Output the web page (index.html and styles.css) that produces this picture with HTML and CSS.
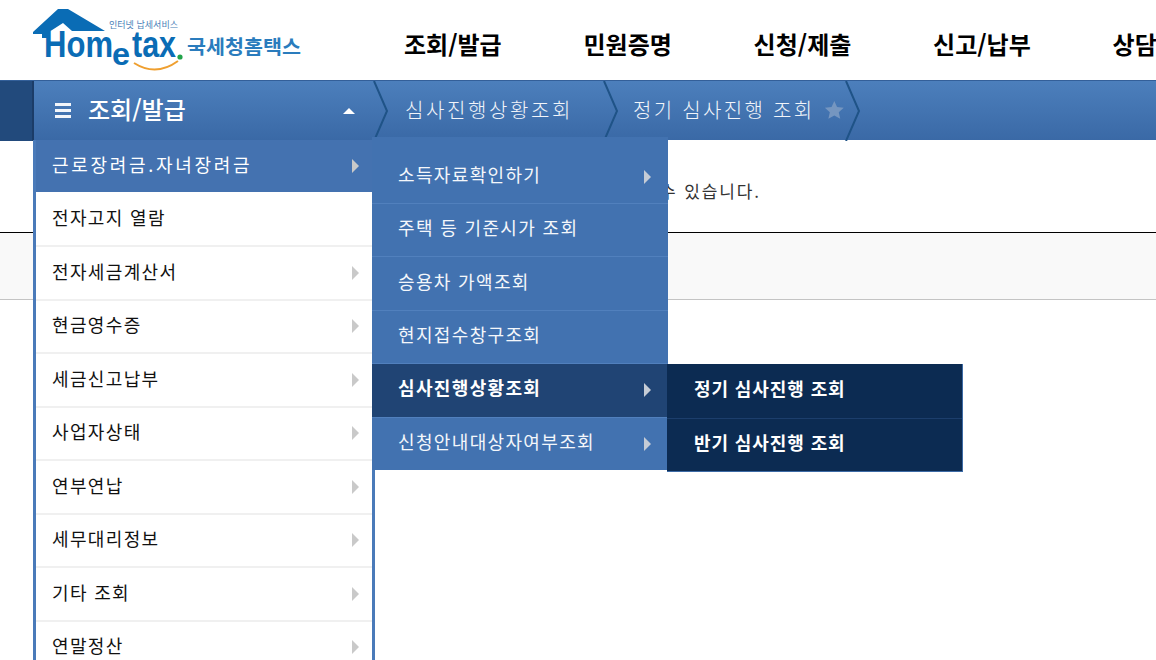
FILE: index.html
```html
<!DOCTYPE html>
<html lang="ko">
<head>
<meta charset="utf-8">
<title>Hometax</title>
<link rel="stylesheet" href="styles.css">
</head>
<body>
<header class="top">
  <a class="logo" href="#" aria-label="Hometax">
    <svg width="275" height="72" viewBox="0 0 275 72">
      <path class="roof" d="M1 26 L26 3 H36 L73 25 H40 L31 17 L17 26 H17 V32 H10 V28 H1 Z"/>
      <text class="lg-small" x="77" y="22" textLength="69" lengthAdjust="spacingAndGlyphs">인터넷 납세서비스</text>
      <text class="lg-home" x="12" y="51" textLength="69" lengthAdjust="spacingAndGlyphs">Hom</text>
      <text class="lg-e" x="80" y="59" textLength="18" lengthAdjust="spacingAndGlyphs">e</text>
      <text class="lg-home" x="100" y="51" textLength="44" lengthAdjust="spacingAndGlyphs">tax</text>
      <circle class="lg-dot" cx="148" cy="51" r="2.6"/>
      <path class="lg-smile" d="M102 57 Q124 71 146 55"/>
      <text class="lg-kr" x="155" y="48" textLength="114" lengthAdjust="spacingAndGlyphs">국세청홈택스</text>
    </svg>
  </a>
  <nav class="gnb">
    <a href="#">조회/발급</a>
    <a href="#">민원증명</a>
    <a href="#">신청/제출</a>
    <a href="#">신고/납부</a>
    <a href="#">상담/제보</a>
  </nav>
</header>

<div class="bar">
  <div class="bar-side"></div>
  <div class="bar-title">
    <span class="burger"><i></i><i></i><i></i></span>
    <span class="title-text">조회/발급</span>
    <span class="caret"></span>
  </div>
  <div class="crumb crumb-first">
    <svg class="chev" width="16" height="60" viewBox="0 0 16 60"><path d="M1 0 L14 30 L1 60"/></svg>
    <span class="crumb-text">심사진행상황조회</span>
  </div>
  <div class="crumb crumb-second">
    <svg class="chev" width="16" height="60" viewBox="0 0 16 60"><path d="M1 0 L14 30 L1 60"/></svg>
    <span class="crumb-text">정기 심사진행 조회</span>
    <svg class="star" width="24" height="24" viewBox="0 0 24 24"><path d="M12 1.5 L15.2 8.6 L23 9.4 L17.2 14.6 L18.9 22.3 L12 18.3 L5.1 22.3 L6.8 14.6 L1 9.4 L8.8 8.6 Z"/></svg>
  </div>
  <svg class="chev" width="16" height="60" viewBox="0 0 16 60"><path d="M1 0 L14 30 L1 60"/></svg>
</div>

<main class="content">
  <p class="desc">수 있습니다.</p>
  <div class="info-box"></div>
</main>

<ul class="menu menu-1">
  <li class="on"><a href="#">근로장려금.자녀장려금</a><span class="arrow"></span></li>
  <li><a href="#">전자고지 열람</a></li>
  <li><a href="#">전자세금계산서</a><span class="arrow"></span></li>
  <li><a href="#">현금영수증</a><span class="arrow"></span></li>
  <li><a href="#">세금신고납부</a><span class="arrow"></span></li>
  <li><a href="#">사업자상태</a><span class="arrow"></span></li>
  <li><a href="#">연부연납</a><span class="arrow"></span></li>
  <li><a href="#">세무대리정보</a><span class="arrow"></span></li>
  <li><a href="#">기타 조회</a><span class="arrow"></span></li>
  <li><a href="#">연말정산</a><span class="arrow"></span></li>
</ul>

<ul class="menu menu-2">
  <li class="first"><a href="#">소득자료확인하기</a><span class="arrow"></span></li>
  <li><a href="#">주택 등 기준시가 조회</a></li>
  <li><a href="#">승용차 가액조회</a></li>
  <li><a href="#">현지접수창구조회</a></li>
  <li class="sel"><a href="#">심사진행상황조회</a><span class="arrow"></span></li>
  <li><a href="#">신청안내대상자여부조회</a><span class="arrow"></span></li>
</ul>

<ul class="menu menu-3">
  <li><a href="#">정기 심사진행 조회</a></li>
  <li><a href="#">반기 심사진행 조회</a></li>
</ul>
</body>
</html>
```
FILE: styles.css
```css
* { box-sizing: border-box; }
html, body { margin: 0; padding: 0; }
body {
  width: 1156px;
  height: 660px;
  overflow: hidden;
  position: relative;
  background: #fff;
  font-family: "Noto Sans CJK KR", "Noto Sans", sans-serif;
  color: #111;
}
a { color: inherit; text-decoration: none; }
ul { list-style: none; margin: 0; padding: 0; }

.top { height: 80px; display: flex; align-items: flex-start; }
.logo { display: block; width: 404px; height: 80px; padding: 6px 0 0 32px; flex: none; }
.logo svg { display: block; }
.roof { fill: #0a6cb5; }
.lg-small { font-size: 9px; fill: #4a7fb8; }
.lg-home { font: bold 36px "Liberation Sans", sans-serif; fill: #0a6cb5; }
.lg-e { font: bold 32px "Liberation Sans", sans-serif; fill: #0a6cb5; }
.lg-dot { fill: #22a34a; }
.lg-smile { fill: none; stroke: #ef9f2f; stroke-width: 2; }
.lg-kr { font-size: 19px; font-weight: 700; fill: #2a7cbd; }

.gnb { display: flex; gap: 81.8px; height: 80px; align-items: center; white-space: nowrap; padding-top: 8px; flex: none; }
.gnb a { font-size: 24px; font-weight: 700; color: #000; line-height: 1; }

.bar {
  height: 60px;
  display: flex;
  align-items: center;
  background: linear-gradient(#4c7fbc, #3a69a6);
  border-top: 1px solid #335f99;
  color: #fff;
}
.bar-side { width: 34px; height: 60px; flex: none; background: #224a7c; border-right: 2px solid #1b3c68; }
.bar-title { width: 339px; height: 60px; flex: none; display: flex; align-items: center; padding-left: 21px; }
.burger { width: 16px; display: flex; flex-direction: column; gap: 3px; margin-right: 17px; }
.burger i { display: block; height: 3px; background: #f2f5fa; }
.title-text { font-size: 24px; font-weight: 500; line-height: 1; width: 255px; padding-bottom: 4px; }
.caret { width: 0; height: 0; border-left: 6px solid transparent; border-right: 6px solid transparent; border-bottom: 6px solid #fff; }
.crumb { height: 60px; flex: none; display: flex; align-items: center; }
.crumb-first { width: 230px; }
.crumb-second { width: 242px; }
.crumb-text { font-size: 20px; letter-spacing: 2.6px; margin-left: 16px; padding-bottom: 2px; white-space: nowrap; color: #f2f5fa; font-weight: 300; }
.crumb-second .crumb-text { margin-left: 14px; letter-spacing: 2.3px; }
.star { margin-left: 10px; margin-bottom: 2px; fill: #7596c0; }
.chev { flex: none; fill: none; stroke: #1f5387; stroke-width: 2; }

.content { position: relative; height: 520px; padding-left: 660px; }
.desc { margin: 0; padding-top: 39px; height: 92px; font-size: 17px; line-height: 24px; letter-spacing: 1.9px; color: #333; white-space: nowrap; }
.info-box { margin-left: -660px; height: 68px; background: #f9f9f9; border-top: 1px solid #000; border-bottom: 1px solid #c4c4c4; }

.menu { position: absolute; }
.menu li { display: flex; align-items: center; justify-content: space-between; white-space: nowrap; }
.arrow { width: 0; height: 0; margin-top: 4px; border-top: 7px solid transparent; border-bottom: 7px solid transparent; border-left: 7px solid #c9c9c9; }

.menu-1 { left: 33px; top: 140px; width: 342px; height: 520px; overflow: hidden; background: #fff; border: solid #4a7ab9; border-width: 0 3px; }
.menu-1 li { height: 53.5px; padding: 0 13px 4px 16px; border-bottom: 2px solid #f0f0f0; font-size: 18px; letter-spacing: 1.35px; color: #111; }
.menu-1 li.on { height: 52px; margin: 0 -1px 0 -3px; padding-left: 19px; padding-right: 14px; background: #4472b0; color: #fff; border: 0; letter-spacing: 2.7px; }
.menu-1 li.on + li { height: 55px; }

.menu-2 { left: 372px; top: 137px; width: 296px; background: #4272b0; color: #f4f7fb; }
.menu-2 li { height: 53.4px; padding: 0 17px 6px 26px; border-top: 1px solid #5180bd; font-size: 18px; letter-spacing: 1.35px; }
.menu-2 li.first { height: 66px; border-top: 0; padding-top: 7px; padding-bottom: 0; }
.menu-2 li.sel { background: #204474; color: #fff; font-weight: 700; border-bottom: 0; }
.menu-2 .arrow { margin-top: 6px; border-left-color: #c5ccd6; }

.menu-3 { left: 667px; top: 364px; width: 296px; background: #0c2b52; color: #fff; border-right: 1px solid #3d6ba6; border-bottom: 1px solid #3d6ba6; }
.menu-3 li { height: 53.5px; padding: 0 0 6px 27px; font-size: 18px; font-weight: 700; letter-spacing: .9px; }
.menu-3 li + li { border-top: 1px solid #1c3e6c; }
```
